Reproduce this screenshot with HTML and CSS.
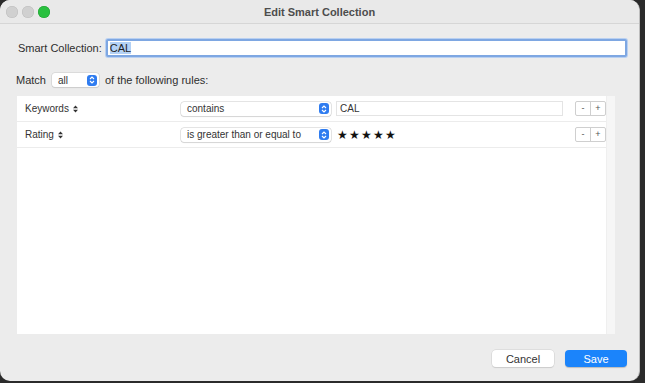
FILE: index.html
```html
<!DOCTYPE html>
<html lang="en">
<head>
    <meta charset="UTF-8">
    <title>Edit Smart Collection</title>
    <link rel="stylesheet" href="styles.css">
</head>
<body>
    <div class="window">
        <div class="titlebar">
            <div class="lights">
                <span class="light"></span>
                <span class="light"></span>
                <span class="light green"></span>
            </div>
            <div class="title">Edit Smart Collection</div>
            <div></div>
        </div>

        <div class="content">
            <div class="name-row">
                <label class="label">Smart Collection:</label>
                <div class="name-field"><span class="selected">CAL</span></div>
            </div>

            <div class="match-row">
                <span class="label">Match</span>
                <div class="popup small">
                    <span>all</span>
                    <span class="arrows">
                        <svg width="6" height="8" viewBox="0 0 6 8"><path d="M1 3 L3 1 L5 3 M1 5 L3 7 L5 5" fill="none" stroke="#fff" stroke-width="1.1"/></svg>
                    </span>
                </div>
                <span class="label">of the following rules:</span>
            </div>

            <div class="rules">
                <div class="rules-list">
                    <div class="rule">
                        <div class="field-name">Keywords
                            <svg class="updown" width="5" height="8" viewBox="0 0 5 8"><path d="M0 3.3 L2.5 0.5 L5 3.3 Z M0 4.7 L2.5 7.5 L5 4.7 Z" fill="#333"/></svg>
                        </div>
                        <div class="popup wide">
                            <span>contains</span>
                            <span class="arrows">
                                <svg width="6" height="8" viewBox="0 0 6 8"><path d="M1 3 L3 1 L5 3 M1 5 L3 7 L5 5" fill="none" stroke="#fff" stroke-width="1.1"/></svg>
                            </span>
                        </div>
                        <div class="value-field">CAL</div>
                        <div class="stepper"><span>-</span><span>+</span></div>
                    </div>
                    <div class="rule">
                        <div class="field-name">Rating
                            <svg class="updown" width="5" height="8" viewBox="0 0 5 8"><path d="M0 3.3 L2.5 0.5 L5 3.3 Z M0 4.7 L2.5 7.5 L5 4.7 Z" fill="#333"/></svg>
                        </div>
                        <div class="popup wide">
                            <span>is greater than or equal to</span>
                            <span class="arrows">
                                <svg width="6" height="8" viewBox="0 0 6 8"><path d="M1 3 L3 1 L5 3 M1 5 L3 7 L5 5" fill="none" stroke="#fff" stroke-width="1.1"/></svg>
                            </span>
                        </div>
                        <div class="stars">&#9733;&#9733;&#9733;&#9733;&#9733;</div>
                        <div class="stepper"><span>-</span><span>+</span></div>
                    </div>
                </div>
                <div class="scroller"></div>
            </div>

            <div class="actions">
                <button class="btn">Cancel</button>
                <button class="btn primary">Save</button>
            </div>
        </div>
    </div>
</body>
</html>
```

FILE: styles.css
```css
body {
    margin: 0;
    background: #2b2b2b;
    font-family: 'Liberation Sans', Arial, sans-serif;
    color: #262626;
}
.window {
    width: 640px;
    height: 381px;
    background: #ececec;
    border-radius: 10px;
    overflow: hidden;
    box-sizing: border-box;
    border-right: 1px solid #bdbdbd;
}
.titlebar {
    height: 23px;
    display: grid;
    grid-template-columns: 1fr auto 1fr;
    align-items: center;
    border-bottom: 1px solid #d6d6d6;
    background: #e9e9e9;
}
.lights {
    display: flex;
    gap: 4px;
    padding-left: 6px;
    padding-top: 1px;
}
.light {
    width: 12px;
    height: 12px;
    border-radius: 50%;
    background: #d0d0d0;
    box-shadow: inset 0 0 0 0.5px #bcbcbc;
}
.light.green {
    background: #29c03f;
    box-shadow: inset 0 0 0 0.5px #1f9e31;
}
.title {
    font-size: 11px;
    font-weight: bold;
    color: #4d4d4d;
}
.content {
    padding: 15px 12px 0 16px;
}
.label {
    font-size: 11px;
    color: #2e2e2e;
}
.name-row {
    display: flex;
    align-items: center;
    gap: 4px;
    padding-left: 2px;
}
.name-field {
    flex: 1;
    height: 14px;
    background: #fff;
    border: 2px solid #7ea7e2;
    border-radius: 2px;
    padding: 0 2px;
    font-size: 11px;
    line-height: 14px;
    box-shadow: 0 0 0 1px #b9d0f1;
}
.selected {
    background: #b3d1f5;
    color: #1f1f1f;
}
.match-row {
    display: flex;
    align-items: center;
    gap: 6px;
    margin-top: 16px;
}
.popup {
    display: flex;
    align-items: center;
    justify-content: space-between;
    height: 14px;
    background: #fff;
    border-radius: 3px;
    box-shadow: 0 0 0 0.5px #c9c9c9, 0 1px 1px rgba(0, 0, 0, 0.12);
    padding: 0 2px 0 6px;
    font-size: 10px;
    color: #333;
}
.popup.small {
    width: 39px;
}
.popup.wide {
    width: 142px;
}
.arrows {
    width: 10px;
    height: 11px;
    border-radius: 3px;
    background: #2f7cf0;
    display: flex;
    align-items: center;
    justify-content: center;
}
.rules {
    display: flex;
    margin: 9px 0 0 1px;
    width: 598px;
    height: 238px;
    background: #fff;
}
.rules-list {
    flex: 1;
}
.scroller {
    width: 11px;
    background: #f6f6f6;
    border-left: 1px solid #efefef;
}
.rule {
    display: flex;
    align-items: center;
    height: 25px;
    border-bottom: 1px solid #ececec;
    font-size: 10px;
}
.field-name {
    width: 156px;
    padding-left: 8px;
    color: #333;
    display: flex;
    align-items: center;
    gap: 4px;
}
.value-field {
    width: 222px;
    height: 13px;
    margin-left: 5px;
    border: 1px solid #e4e4e4;
    padding-left: 3px;
    line-height: 13px;
    color: #333;
}
.stars {
    width: 226px;
    margin-left: 6px;
    font-size: 12px;
    letter-spacing: 1px;
    color: #111;
}
.stepper {
    display: flex;
    margin-left: 12px;
    border: 1px solid #cfcfcf;
    border-radius: 2px;
}
.stepper span {
    width: 14px;
    height: 13px;
    line-height: 13px;
    text-align: center;
    font-size: 9px;
    color: #555;
}
.stepper span + span {
    border-left: 1px solid #cfcfcf;
}
.actions {
    display: flex;
    justify-content: flex-end;
    gap: 11px;
    margin-top: 16px;
}
.btn {
    width: 62px;
    height: 17px;
    border: none;
    border-radius: 4px;
    background: #fff;
    box-shadow: 0 0 0 0.5px #cfcfcf, 0 1px 1px rgba(0, 0, 0, 0.15);
    font-family: inherit;
    font-size: 11px;
    color: #333;
    padding: 0;
}
.btn.primary {
    background: #1b84fb;
    color: #fff;
    box-shadow: 0 1px 1px rgba(0, 0, 0, 0.2);
}
```
